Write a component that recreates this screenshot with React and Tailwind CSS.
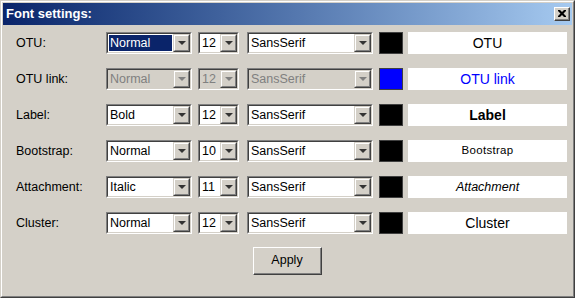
import clsx from "clsx";

const rows = [
  { label: "OTU:", style: "Normal", size: "12", preview: "OTU", color: "bg-black", pv: "text-[14px] text-black", selected: true },
  { label: "OTU link:", style: "Normal", size: "12", preview: "OTU link", color: "bg-[#0000ff]", pv: "text-[14px] text-[#0000ff]", disabled: true },
  { label: "Label:", style: "Bold", size: "12", preview: "Label", color: "bg-black", pv: "text-[14px] font-bold text-black" },
  { label: "Bootstrap:", style: "Normal", size: "10", preview: "Bootstrap", color: "bg-black", pv: "text-[11.5px] tracking-[0.3px] text-black" },
  { label: "Attachment:", style: "Italic", size: "11", preview: "Attachment", color: "bg-black", pv: "text-[12.5px] italic text-black" },
  { label: "Cluster:", style: "Normal", size: "12", preview: "Cluster", color: "bg-black", pv: "text-[14px] text-black" },
];

function Arrow({ disabled }) {
  return (
    <div className="flex w-[17px] border border-t-[#d4d0c8] border-l-[#d4d0c8] border-b-[#404040] border-r-[#404040]">
      <div className="flex flex-1 items-center justify-center bg-[#d4d0c8] border border-t-white border-l-white border-b-[#808080] border-r-[#808080]">
        <svg width="8" height="4" viewBox="0 0 8 4">
          <polygon points="0,0 8,0 4,4" fill={disabled ? "#808080" : "#333"} />
        </svg>
      </div>
    </div>
  );
}

function Combo({ value, className, disabled, selected }) {
  return (
    <div className={clsx("flex h-[22px] shrink-0 border border-t-[#808080] border-l-[#808080] border-b-white border-r-white", className)}>
      <div className="flex flex-1 border border-t-[#404040] border-l-[#404040] border-b-[#d4d0c8] border-r-[#d4d0c8]">
        <div className={clsx("flex flex-1 p-[1px]", disabled ? "bg-[#d4d0c8]" : "bg-white")}>
          <div
            className={clsx(
              "flex flex-1 items-center pl-[1px] text-[12.5px] leading-none",
              selected && "bg-[#0a246a] text-white",
              disabled ? "text-[#808080]" : !selected && "text-black"
            )}
          >
            {value}
          </div>
        </div>
        <Arrow disabled={disabled} />
      </div>
    </div>
  );
}

export default function App() {
  return (
    <div className="w-[575px] h-[298px] border border-t-[#d4d0c8] border-l-[#d4d0c8] border-b-[#404040] border-r-[#404040] font-['Liberation_Sans',Arial,sans-serif]">
      <div className="flex h-full flex-col border border-t-white border-l-white border-b-[#808080] border-r-[#808080] bg-[#d4d0c8] p-[1px]">
        <div className="flex h-[22px] items-center justify-between bg-gradient-to-r from-[#0a246a] to-[#a6caf0] pl-[3px] pr-[2px]">
          <span className="text-[13px] font-bold text-white">Font settings:</span>
          <div className="flex h-[14px] w-[16px] border border-t-white border-l-white border-b-[#404040] border-r-[#404040]">
            <div className="flex flex-1 items-center justify-center bg-[#d4d0c8] border-b border-r border-b-[#808080] border-r-[#808080]">
              <svg width="8" height="7" viewBox="0 0 8 7">
                <path d="M0 0h2l2 2 2-2h2v1l-2.5 2.5 2.5 2.5v1h-2l-2-2-2 2h-2v-1l2.5-2.5-2.5-2.5z" fill="#000" />
              </svg>
            </div>
          </div>
        </div>
        <div className="flex flex-1 flex-col pt-[7px] pl-[13px]">
          <div className="flex flex-col gap-[14px]">
            {rows.map((r) => (
              <div key={r.label} className="flex h-[22px] items-center">
                <div className="w-[90px] text-[12.5px] text-black">{r.label}</div>
                <Combo value={r.style} className="w-[86px]" disabled={r.disabled} selected={r.selected} />
                <Combo value={r.size} className="ml-[6px] w-[41px]" disabled={r.disabled} />
                <Combo value="SansSerif" className="ml-[8px] w-[126px]" disabled={r.disabled} />
                <div className={clsx("ml-[6px] h-[22px] w-[24px] border border-[#404040]", r.color)} />
                <div className={clsx("ml-[5px] flex h-[22px] w-[159px] items-center justify-center bg-white", r.pv)}>
                  {r.preview}
                </div>
              </div>
            ))}
          </div>
          <div className="mt-[13px] flex justify-center pr-[13px]">
            <div className="flex h-[28px] w-[69px] border border-t-white border-l-white border-b-[#404040] border-r-[#404040]">
              <div className="flex flex-1 items-center justify-center border-b border-r border-b-[#808080] border-r-[#808080] text-[12.5px] text-black">
                Apply
              </div>
            </div>
          </div>
        </div>
      </div>
    </div>
  );
}
